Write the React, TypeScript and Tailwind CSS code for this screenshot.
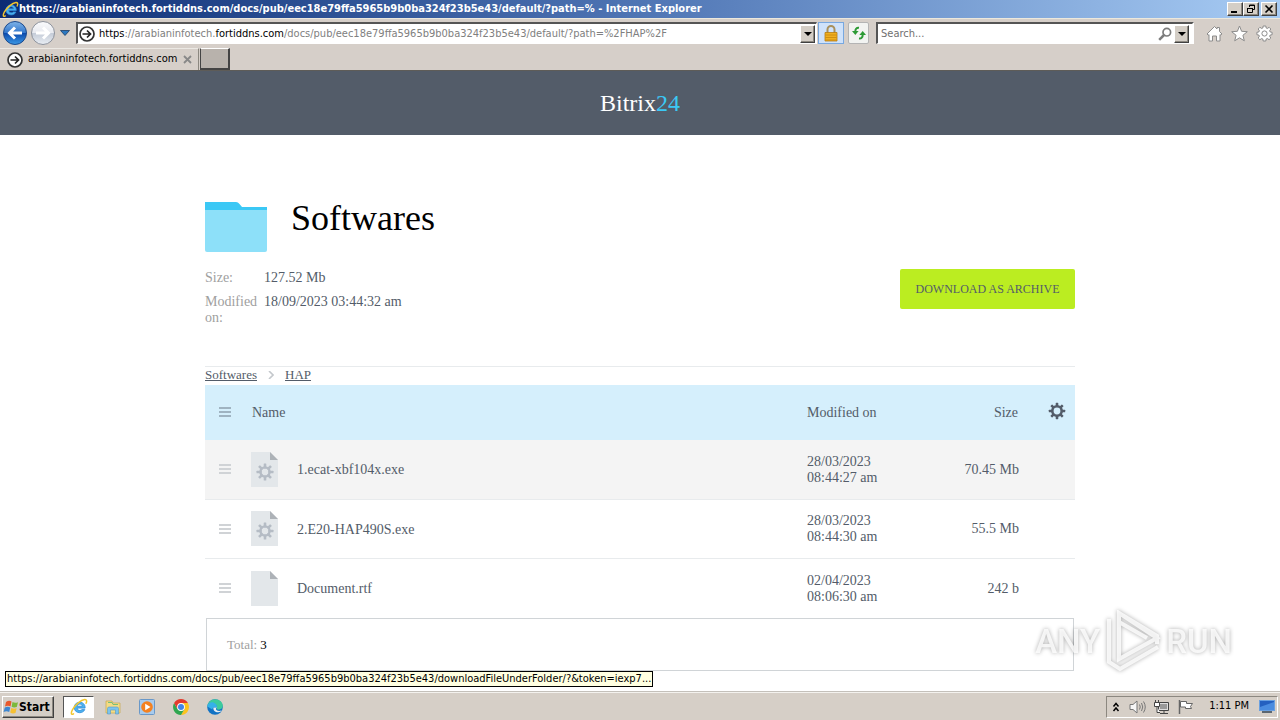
import React from "react";

const SERIF = "font-['Liberation_Serif',serif]";
const UI = "font-['DejaVu_Sans_Condensed','DejaVu_Sans',sans-serif]";

const TEETH = [0, 45, 90, 135, 180, 225, 270, 315];

function Gear({ className, hole = 3.4 }: { className: string; hole?: number }) {
  return (
    <svg viewBox="0 0 18 18" className={className} aria-hidden="true">
      {TEETH.map((a) => (
        <rect key={a} x="7.7" y="0.8" width="2.6" height="4" rx="0.6" fill="currentColor" transform={`rotate(${a} 9 9)`} />
      ))}
      <circle cx="9" cy="9" r={(hole + 6) / 2} fill="none" stroke="currentColor" strokeWidth={6 - hole} />
    </svg>
  );
}

function IeLogo({ className }: { className: string }) {
  return (
    <svg viewBox="0 0 18 18" className={className} aria-hidden="true">
      <path d="M14.8 11.6c-.9 2-2.8 3.1-5.1 3.1-3.2 0-5.5-2.2-5.5-5.2s2.3-5.3 5.5-5.3c3.3 0 5.6 2.4 5.4 5.9H7.2c.1 1.5 1.1 2.4 2.6 2.4 1 0 1.7-.3 2.1-.9h2.9zM12.3 8.2c-.2-1.3-1.1-2.1-2.5-2.1S7.500 6.900 7.200 8.200h5.100z" fill="#4cb2ee" stroke="#2d8ad8" strokeWidth=".8" />
      <path d="M3.500 15.800C1.300 17.200.4 15.500 2.400 11.800 4.800 7.300 10.900 2 14.700 1.600c2.200-.2 2.300 1.600 1.400 3.700" fill="none" stroke="#f2c62e" strokeWidth="1.500" strokeLinecap="round" />
    </svg>
  );
}

function PageArrow({ className }: { className: string }) {
  return (
    <svg viewBox="0 0 16 16" className={className} aria-hidden="true">
      <circle cx="8" cy="8" r="7" fill="#fff" stroke="#333" strokeWidth="1.700" />
      <path d="M3.500 8h7.500M8 4.500 11.500 8 8 11.500" fill="none" stroke="#222" strokeWidth="1.700" />
    </svg>
  );
}

function RoundArrow({ forward = false }: { forward?: boolean }) {
  return (
    <svg viewBox="0 0 26 26" className="size-[26px]" aria-hidden="true">
      <defs>
        <linearGradient id={forward ? "fwd" : "back"} x1="0" y1="0" x2="0" y2="1">
          <stop offset="0" stopColor={forward ? "#fbfbfd" : "#7fb4e8"} />
          <stop offset=".48" stopColor={forward ? "#e8eaf0" : "#3478cc"} />
          <stop offset=".52" stopColor={forward ? "#c5ccd8" : "#0c4bae"} />
          <stop offset="1" stopColor={forward ? "#e9eef4" : "#3c9ae6"} />
        </linearGradient>
      </defs>
      <circle cx="13" cy="13" r="11.500" fill={forward ? "url(#fwd)" : "url(#back)"} stroke={forward ? "#8d929c" : "#1d4a8c"} />
      <path
        d={forward ? "M6 13h12M13 7.500l5.500 5.500-5.500 5.500" : "M20 13H8M13 7.500 7.500 13l5.500 5.500"}
        fill="none"
        stroke="#fff"
        strokeWidth="3"
      />
    </svg>
  );
}

const RAISED = "border border-t-white border-l-white border-r-[#404040] border-b-[#404040] bg-[#d4cec6] shadow-[inset_-1px_-1px_0_#8c8880]";

function TitleBar() {
  return (
    <header className="flex h-[18px] items-center bg-linear-to-r from-[#0c2c74] via-[#4f75b4] to-[#a8ccf4] pr-[3px] pl-[2px] text-white">
      <IeLogo className="size-[17px] shrink-0" />
      <h1 className="min-w-0 flex-1 truncate text-[11px] leading-[18px] font-bold">
        https://arabianinfotech.fortiddns.com/docs/pub/eec18e79ffa5965b9b0ba324f23b5e43/default/?path=% - Internet Explorer
      </h1>
      <div className="flex text-black">
        <button aria-label="Minimize" className={`flex h-[14px] w-4 items-center justify-center ${RAISED}`}>
          <svg viewBox="0 0 12 10" className="h-[10px] w-3"><path d="M2 7h6v2H2z" /></svg>
        </button>
        <button aria-label="Restore" className={`flex h-[14px] w-4 items-center justify-center ${RAISED}`}>
          <svg viewBox="0 0 12 10" className="h-[10px] w-3">
            <path d="M4.500 3V1h5v4.500H8M4 1.500h6M2.500 4.500h5v4h-5zM2 4.500h6" fill="none" stroke="#000" />
          </svg>
        </button>
        <button aria-label="Close" className={`ml-[2px] flex h-[14px] w-4 items-center justify-center ${RAISED}`}>
          <svg viewBox="0 0 12 10" className="h-[10px] w-3"><path d="m2.500 1.500 7 7m0-7-7 7" stroke="#000" strokeWidth="1.600" /></svg>
        </button>
      </div>
    </header>
  );
}

function DropButton({ label }: { label: string }) {
  return (
    <button aria-label={label} className={`flex h-[18px] w-[15px] shrink-0 items-center justify-center ${RAISED}`}>
      <svg viewBox="0 0 8 4" className="h-1 w-2"><path d="M0 0h8L4 4z" /></svg>
    </button>
  );
}

function Toolbar() {
  return (
    <div className="flex h-[29px] items-center border-t border-[#ece8dc] pr-[7px] pl-[2px]">
      <button aria-label="Back"><RoundArrow /></button>
      <button aria-label="Forward" className="ml-[2px]"><RoundArrow forward /></button>
      <button aria-label="Recent pages" className="ml-[4px]">
        <svg viewBox="0 0 10 6" className="h-[6px] w-[10px]"><path d="M.5.5h9L5 5.500z" fill="#2b78c0" stroke="#1b3c66" strokeWidth=".8" /></svg>
      </button>
      <div className="ml-[6px] flex h-[22px] min-w-0 flex-1 items-center border-t-2 border-r border-b border-l-2 border-t-[#555] border-r-white border-b-white border-l-[#555] bg-white pr-px pl-[1px]">
        <PageArrow className="size-4 shrink-0" />
        <div
          role="textbox"
          aria-label="Address"
          contentEditable
          suppressContentEditableWarning
          className="ml-[4px] min-w-0 flex-1 overflow-hidden text-[11px] leading-4 whitespace-nowrap text-[#808080]"
        >
          <span className="text-black">https</span>://arabianinfotech.<span className="text-black">fortiddns.com</span>
          /docs/pub/eec18e79ffa5965b9b0ba324f23b5e43/default/?path=%2FHAP%2F
        </div>
        <DropButton label="Show addresses" />
      </div>
      <button aria-label="Security report" className="ml-[1px] flex h-[22px] w-[26px] items-center justify-center border border-[#78a8e0] bg-[#cfe2fa]">
        <svg viewBox="0 0 14 17" className="h-[17px] w-[14px]">
          <path d="M3.500 8V4.500a3.500 3.500 0 0 1 7 0V8" fill="none" stroke="#a8905c" strokeWidth="2" />
          <path d="M1 7.500h12V16H1z" fill="#f0b020" stroke="#b87c10" strokeWidth=".8" />
          <path d="M1.500 10h11M1.500 12.500h11M1.500 15h11" stroke="#c8860c" strokeWidth=".8" />
        </svg>
      </button>
      <button aria-label="Refresh" className="ml-[4px] flex h-[22px] w-[21px] items-center justify-center rounded-[2px] border border-[#b4b4b4] bg-[#f2f3f1]">
        <svg viewBox="0 0 16 14" className="h-[14px] w-4 text-[#2c9a34]" fill="none" stroke="currentColor" strokeWidth="2">
          <path d="M8 1.800C5.500 1.500 4.300 3 4.300 5.500" /><path d="M1 5h6.600L4.300 9z" fill="currentColor" stroke="none" />
          <path d="M8 12.500c2.500.2 3.700-1.300 3.700-3.800" /><path d="M8.400 9H15l-3.300-4z" fill="currentColor" stroke="none" />
        </svg>
      </button>
      <div className="ml-[7px] flex h-[22px] w-[318px] items-center border-t-2 border-r-2 border-b border-l-2 border-t-[#555] border-r-white border-b-white border-l-[#555] bg-white px-[3px]">
        <input
          type="search"
          aria-label="Search"
          placeholder="Search..."
          className="min-w-0 flex-1 bg-transparent text-[11px] leading-4 outline-none placeholder:text-[#707070]"
        />
        <button aria-label="Start search" className="mr-[2px]">
          <svg viewBox="0 0 14 14" className="size-[14px]" fill="none" stroke="#7c7c7c">
            <circle cx="8.800" cy="5.200" r="3.800" strokeWidth="1.700" /><path d="M6 8 1.200 12.800" strokeWidth="2.500" />
          </svg>
        </button>
        <DropButton label="Search providers" />
      </div>
      <div className="ml-[12px] flex items-center gap-[8px]">
        <button aria-label="Home">
          <svg viewBox="0 0 17 17" className="size-[17px]" fill="#fff" stroke="#8c8c8c">
            <path d="m1 9 7.500-7.500L11 4V2.500h2.500v4L16 9l-1.500 1-.5-.4V16h-3.500v-5h-4v5H3V9.600l-.7.600z" />
          </svg>
        </button>
        <button aria-label="Favorites">
          <svg viewBox="0 0 17 17" className="size-[17px]" fill="#fff" stroke="#8c8c8c">
            <path d="m8.500 1 2.100 5.300 5.700.4-4.400 3.600 1.400 5.500-4.800-3-4.800 3 1.400-5.500L.7 6.700l5.700-.4z" />
          </svg>
        </button>
        <button aria-label="Tools">
          <svg viewBox="0 0 17 17" className="size-[17px]" fill="#fff" stroke="#8c8c8c">
            <path d="M7.200 1h2.600l.4 2 1.100.5 1.800-1.200 1.700 1.700-1.200 1.800.5 1.100 2 .4v2.400l-2 .4-.5 1.100 1.200 1.800-1.700 1.700-1.800-1.200-1.100.5-.4 2H7.200l-.4-2-1.100-.5-1.800 1.200L2.200 13l1.200-1.800-.5-1.100-2-.4V7.300l2-.4.5-1.100L2.200 4l1.700-1.700 1.800 1.200 1.100-.5z" />
            <circle cx="8.500" cy="8.500" r="2.600" />
          </svg>
        </button>
      </div>
    </div>
  );
}

function TabStrip() {
  return (
    <nav aria-label="Tabs" className="flex h-[24px] items-end border-b border-[#5e5c58]">
      <div className="flex h-[22px] w-[199px] items-center border-t border-r border-t-[#ece9e4] border-r-[#8c8880] pr-[6px] pl-[7px]">
        <PageArrow className="size-4" />
        <button className="ml-[5px] flex-1 text-left text-[11px] whitespace-nowrap text-black">arabianinfotech.fortiddns.com</button>
        <button aria-label="Close tab">
          <svg viewBox="0 0 9 9" className="size-[9px]"><path d="m1 1 7 7m0-7L1 8" stroke="#888" strokeWidth="1.800" /></svg>
        </button>
      </div>
      <button aria-label="New tab" className="ml-px h-[22px] w-[30px] border border-r-2 border-b-2 border-white border-r-[#444] border-b-[#444] border-l-[#444] bg-[#b8b2ac]" />
    </nav>
  );
}

function Lines({ className }: { className: string }) {
  return (
    <svg viewBox="0 0 12 10" className={`h-[10px] w-3 ${className}`} aria-hidden="true">
      <path d="M0 0h12v2H0zM0 4h12v2H0zM0 8h12v2H0z" fill="currentColor" />
    </svg>
  );
}

function FileIcon({ gear }: { gear: boolean }) {
  return (
    <svg viewBox="0 0 27 35" className="h-[35px] w-[27px] shrink-0 text-[#b5bcc5]" aria-hidden="true">
      <path d="M0 0h19l8 8v27H0z" fill="#e3e7ea" />
      <path d="M19 0v8h8z" fill="#adb2b7" />
      {gear && (
        <g>
          {TEETH.map((a) => (
            <rect key={a} x="12.700" y="11.500" width="2.600" height="5" rx=".5" fill="currentColor" transform={`rotate(${a} 14 20)`} />
          ))}
          <circle cx="14" cy="20" r="4.600" fill="none" stroke="currentColor" strokeWidth="2.400" />
        </g>
      )}
    </svg>
  );
}

const FILES = [
  { name: "1.ecat-xbf104x.exe", date: "28/03/2023 08:44:27 am", size: "70.45 Mb", exe: true, active: true },
  { name: "2.E20-HAP490S.exe", date: "28/03/2023 08:44:30 am", size: "55.5 Mb", exe: true, active: false },
  { name: "Document.rtf", date: "02/04/2023 08:06:30 am", size: "242 b", exe: false, active: false },
];

function FileTable() {
  return (
    <table className="w-full table-fixed border-collapse text-left text-[14px] leading-4 text-[#535c69]">
      <colgroup>
        <col className="w-[46px]" />
        <col />
        <col className="w-[110px]" />
        <col className="w-[102px]" />
        <col className="w-[56px]" />
      </colgroup>
      <thead>
        <tr className="h-[55px] bg-[#d5effc]">
          <th scope="col" aria-label="Drag" className="pb-[2px] pl-[14px]"><Lines className="text-[#9fb3c1]" /></th>
          <th scope="col" className="pl-px font-normal">Name</th>
          <th scope="col" className="font-normal">Modified on</th>
          <th scope="col" className="pr-px text-right font-normal">Size</th>
          <th scope="col" className="pb-[4px] pl-[29px]">
            <button aria-label="Table settings" className="block text-[#535c69]"><Gear className="size-[18px]" /></button>
          </th>
        </tr>
      </thead>
      <tbody>
        {FILES.map((f) => (
          <tr key={f.name} className={f.active ? "h-[59px] border-b border-[#e8ebed] bg-[#f4f4f4]" : "h-[59px] border-b border-[#e8ebed] last:h-[60px] last:border-0"}>
            <td className="pl-[14px]"><Lines className="text-[#d0d3d6]" /></td>
            <td>
              <a href="#file" className="flex items-center gap-[19px]">
                <FileIcon gear={f.exe} />
                <span className="pt-[2px]">{f.name}</span>
              </a>
            </td>
            <td className="pt-px">{f.date}</td>
            <td className="pt-px text-right">{f.size}</td>
            <td />
          </tr>
        ))}
      </tbody>
    </table>
  );
}

function Page() {
  return (
    <main className={`flex-1 bg-white ${SERIF}`}>
      <div className="flex h-[64px] items-center justify-center bg-[#535c69] text-[24px] leading-7 text-white">
        <a href="#home">Bitrix<span className="text-[#3bc8f5]">24</span></a>
      </div>
      <div className="mx-auto max-w-[870px] pt-[67px]">
        <div className="flex gap-[24px]">
          <svg viewBox="0 0 62 50" className="h-[50px] w-[62px]" aria-hidden="true">
            <path d="M0 0h31q2 0 3.500 2L37 5h25v10H0z" fill="#3bc8f5" />
            <path d="M0 8h62v40q0 2-2 2H2q-2 0-2-2z" fill="#8de0f9" />
          </svg>
          <h2 className="text-[36px] leading-8 text-black">Softwares</h2>
        </div>
        <div className="mt-[17px] flex items-start justify-between">
          <dl className="grid grid-cols-[52px_auto] gap-x-[7px] gap-y-[8px] pt-px text-[14px] leading-4 text-[#535c69]">
            <dt className="text-[#a0a0a0]">Size:</dt>
            <dd>127.52 Mb</dd>
            <dt className="text-[#a0a0a0]">Modified on:</dt>
            <dd>18/09/2023 03:44:32 am</dd>
          </dl>
          <button className="h-10 w-[175px] rounded-[2px] bg-[#bbed21] text-[12px] text-[#535c69]">DOWNLOAD AS ARCHIVE</button>
        </div>
        <nav aria-label="Breadcrumb" className="mt-[40px] flex items-center border-t border-[#e8ebed] pb-[2px] text-[13px] leading-4 text-[#535c69]">
          <a href="#softwares" className="underline">Softwares</a>
          <svg viewBox="0 0 6 8" className="mx-[11px] h-2 w-[6px]" aria-hidden="true"><path d="m1 0 4 4-4 4" fill="none" stroke="#c4c8cc" strokeWidth="1.600" /></svg>
          <a href="#hap" className="underline">HAP</a>
        </nav>
        <FileTable />
        <p className="mx-px flex h-[53px] items-center gap-[3px] border border-[#d0d4d7] pl-5 text-[13px] text-[#a0a0a0]">
          Total: <span className="text-black">3</span>
        </p>
      </div>
    </main>
  );
}

function Watermark() {
  return (
    <div
      aria-hidden="true"
      className="pointer-events-none absolute right-[48px] bottom-[48px] flex items-center gap-1 font-['Roboto',sans-serif] text-[33px] leading-none font-medium text-white/80 drop-shadow-[0_0_2px_rgba(0,0,0,0.4)]"
    >
      <span>ANY</span>
      <svg viewBox="0 0 58 62" className="h-[62px] w-[58px]" fill="none" stroke="currentColor" strokeWidth="4">
        <path d="M5 9v43l11 7 38-22M15 3v46l38-21zM15 3l38 23v8M15 12l28 16" />
      </svg>
      <span>RUN</span>
    </div>
  );
}

function Taskbar() {
  return (
    <footer className="flex h-[28px] items-center border-t border-[#f4f2ee] bg-[#d6cfc7] pr-[2px] pl-[2px] shadow-[0_-1px_0_#c4c0ba]">
      <button className={`flex h-[22px] w-[52px] items-center text-[12px] font-bold ${RAISED}`}>
        <svg viewBox="0 0 16 16" className="size-4" aria-hidden="true">
          <path d="M3 3q3-2 5.500-.5L7.500 7.500Q5 6 2 7.500z" fill="#e8592c" />
          <path d="M9.500 3q2.500 1.500 5.500.2L13.800 8q-3 1-5.200-.3z" fill="#7cb93c" />
          <path d="M1.800 8.500q3-1.500 5.500 0L6.200 13Q3.500 11.700.6 13z" fill="#3d86d0" />
          <path d="M8.300 9q2.500 1.300 5.300.3L12.500 14q-3 1-5.300-.5z" fill="#f6c032" />
        </svg>
        Start
      </button>
      <nav aria-label="Pinned" className="ml-[9px] flex items-center">
        <button aria-label="Internet Explorer" className="flex h-[22px] w-[31px] items-center justify-center border border-white border-t-[#555] border-l-[#555] bg-white">
          <IeLogo className="size-[18px]" />
        </button>
        <button aria-label="File Explorer" className="ml-[11px]">
          <svg viewBox="0 0 16 16" className="size-4">
            <path d="M1 2h6l1 2h7v10H1z" fill="#f4dc84" stroke="#c8a84a" strokeWidth=".7" />
            <path d="M3 3.500h4l1 2h5" stroke="#7bbf78" fill="none" />
            <path d="M2.500 15V9.500q0-1.500 1.500-1.500h8q1.500 0 1.500 1.500V15h-3v-4h-5v4z" fill="#7cc4ec" stroke="#5498c8" strokeWidth=".6" />
          </svg>
        </button>
        <button aria-label="Media Player" className="ml-[18px]">
          <svg viewBox="0 0 16 16" className="size-4">
            <rect x=".5" y=".5" width="15" height="15" rx="1" fill="#a8cbed" stroke="#6a98c8" />
            <circle cx="8" cy="8" r="5.800" fill="#f48120" /><path d="M6.200 4.700 11.500 8l-5.300 3.300z" fill="#fff" />
          </svg>
        </button>
        <button aria-label="Chrome" className="ml-[18px]">
          <svg viewBox="0 0 16 16" className="size-4">
            <path d="M14.900 4A8 8 0 0 1 8 16l3.500-6L8 4z" fill="#fcc31e" />
            <path d="M1.100 4A8 8 0 0 0 8 16l3.500-6L4.500 10z" fill="#30a650" />
            <path d="M1.100 4A8 8 0 0 1 14.900 4H8L4.500 10z" fill="#e33b2e" />
            <circle cx="8" cy="8" r="3.900" fill="#fff" /><circle cx="8" cy="8" r="3" fill="#4285e8" />
          </svg>
        </button>
        <button aria-label="Edge" className="ml-[18px]">
          <svg viewBox="0 0 16 16" className="size-4">
            <circle cx="8" cy="8" r="7.800" fill="#1272c4" />
            <path d="M.3 7.500C1 3 4 .2 8 .2c4.600 0 7.800 3 7.800 6.600 0 2.300-1.600 3.900-4 3.900-1.800 0-2.600-.8-2-1.700C10.800 7 8.500 4.700 5.800 4.700 3.200 4.700 1 6 .3 7.500z" fill="#3ccb9c" />
            <path d="M.3 7.500C1 4 4 2.700 6.500 3.500 9 4.300 10.700 7 9.800 9 8 7 5.500 8 5.300 10.500" fill="#35b1e8" />
            <path d="M9.800 8.500C8 9.500 9 13 14.600 11.600l-.8 1C10 14.500 5.500 12 6.500 8.500z" fill="#e8eef2" />
          </svg>
        </button>
      </nav>
      <div className="ml-auto flex h-[22px] items-center border border-white border-t-[#8c8880] border-l-[#8c8880] pr-[2px] pl-[5px] text-[11px]">
        <button aria-label="Show hidden icons">
          <svg viewBox="0 0 8 10" className="h-[10px] w-2"><path d="m1.500 4.500 2.500-3 2.500 3M1.500 9 4 6l2.500 3" fill="none" stroke="#000" strokeWidth="1.500" /></svg>
        </button>
        <svg viewBox="0 0 18 16" className="ml-[9px] h-4 w-[18px]" fill="#f6f6f6" stroke="#777" aria-hidden="true">
          <path d="M1 5.500h3L8 2v12l-4-3.500H1z" /><path d="M10.500 5.500q1.500 2.500 0 5M12.500 4q2.500 4 0 8M14.500 2.500q3.500 5.500 0 11" fill="none" />
        </svg>
        <svg viewBox="0 0 17 16" className="ml-[6px] h-4 w-[17px]" aria-hidden="true">
          <path d="M5.500 3.500h10v8h-10z" fill="#ddd" stroke="#444" /><path d="M7 5h7v5H7z" fill="#999" />
          <path d="M7 14.500h8M11 11.500v3" stroke="#444" /><path d="M1.500 3.500h5v4h-5zM2.500 1v2M5.500 1v2M4 7.500v6h3" fill="#fff" stroke="#444" />
        </svg>
        <svg viewBox="0 0 17 16" className="ml-[7px] h-4 w-[17px]" aria-hidden="true">
          <path d="M2.500 1v14" stroke="#666" strokeWidth="1.500" /><path d="M3.500 2.500h6v2h6l-2 3 1 2h-6v-1.500h-5z" fill="#fff" stroke="#666" />
        </svg>
        <time className="ml-[15px]">1:11 PM</time>
        <button aria-label="Show desktop" className="ml-[10px]">
          <svg viewBox="0 0 16 13" className="h-[13px] w-4"><rect x=".5" y=".5" width="15" height="10" fill="#2460c0" stroke="#6aa0e0" /><path d="M1 7 15 2v8H1z" fill="#4a8ce0" /><path d="M3 12h10" stroke="#345" strokeWidth="1.500" /></svg>
        </button>
      </div>
    </footer>
  );
}

export default function App() {
  return (
    <div className={`relative flex min-h-screen flex-col bg-[#d6cfc9] text-black ${UI}`}>
      <TitleBar />
      <Toolbar />
      <TabStrip />
      <Page />
      <Taskbar />
      <Watermark />
      <div role="status" className="absolute bottom-[33px] left-[5px] border border-black bg-[#ffffe1] px-[1px] text-[11px] leading-[14px] whitespace-nowrap">
        https://arabianinfotech.fortiddns.com/docs/pub/eec18e79ffa5965b9b0ba324f23b5e43/downloadFileUnderFolder/?&amp;token=iexp7...
      </div>
    </div>
  );
}
